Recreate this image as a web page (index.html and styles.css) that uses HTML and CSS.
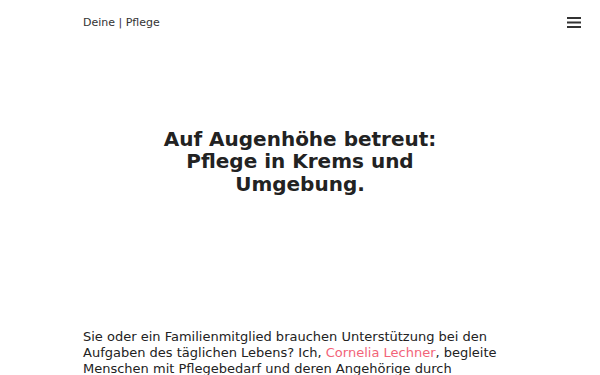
FILE: index.html
```html
<!DOCTYPE html>
<html lang="de">
<head>
<meta charset="utf-8">
<link rel="stylesheet" href="styles.css">
</head>
<body>
<header class="site-header">
  <a class="brand" href="#">Deine | Pflege</a>
  <button class="menu-btn" aria-label="Menü">
    <svg width="14" height="11" viewBox="0 0 14 11"><rect x="0" y="0" width="14" height="2" fill="#333"/><rect x="0" y="4.5" width="14" height="2" fill="#333"/><rect x="0" y="9" width="14" height="2" fill="#333"/></svg>
  </button>
</header>
<main>
  <section class="hero">
    <h1 class="hero-title">Auf Augenhöhe betreut: Pflege in Krems und Umgebung.</h1>
  </section>
  <section class="intro">
    <p>Sie oder ein Familienmitglied brauchen Unterstützung bei den Aufgaben des täglichen Lebens? Ich, <a href="#" class="name">Cornelia Lechner</a>, begleite Menschen mit Pflegebedarf und deren Angehörige durch schwierige Lebensphasen.</p>
  </section>
</main>
</body>
</html>
```
FILE: styles.css
```css
html, body { margin: 0; padding: 0; }
body {
  font-family: "DejaVu Sans", sans-serif;
  color: #222;
  background: #fff;
  width: 600px;
  height: 375px;
  overflow: hidden;
}
.site-header {
  display: flex;
  align-items: center;
  justify-content: space-between;
  height: 45px;
  padding: 0 19px 0 83px;
}
.brand {
  font-size: 11px;
  color: #333;
  text-decoration: none;
}
.menu-btn {
  background: none;
  border: 0;
  padding: 0;
  display: flex;
}
.hero {
  display: flex;
  justify-content: center;
  padding-top: 83px;
  height: 200px;
  box-sizing: border-box;
}
.hero-title {
  margin: 0;
  width: 290px;
  text-align: center;
  font-size: 20px;
  line-height: 22.4px;
  font-weight: bold;
  color: #222;
}
.intro {
  padding: 84px 83px 0 83px;
}
.intro p {
  margin: 0;
  font-size: 13px;
  line-height: 16px;
  color: #222;
}
.name {
  color: #f26479;
  text-decoration: none;
}
```
